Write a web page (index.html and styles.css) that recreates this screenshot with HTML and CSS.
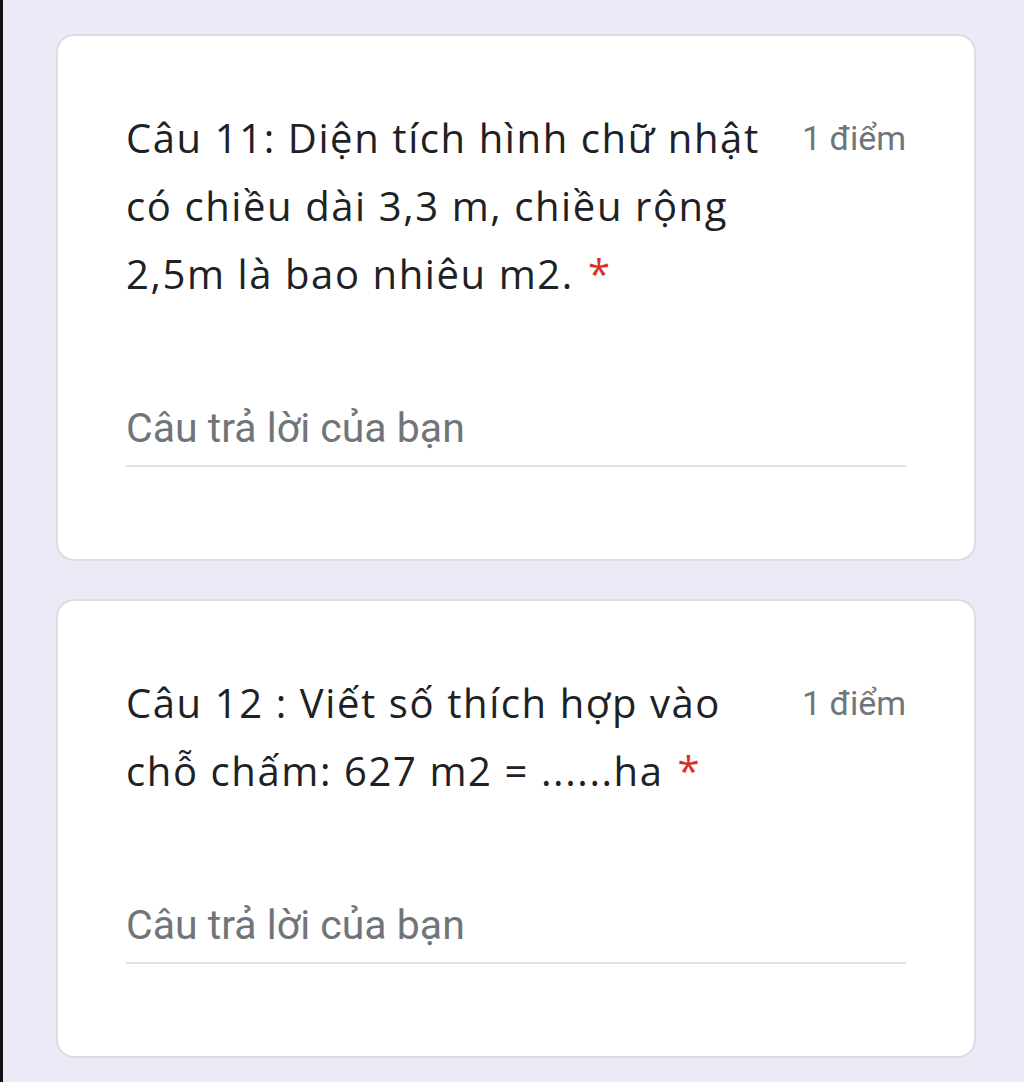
FILE: index.html
```html
<!DOCTYPE html>
<html lang="vi">

<head>
    <meta charset="UTF-8">
    <meta name="viewport" content="width=device-width, initial-scale=1.0">
    <title>Câu hỏi</title>
    <link rel="stylesheet" href="styles.css">
</head>

<body>
    <div class="page">
        <!-- Question 11 -->
        <div class="card">
            <div class="question-row">
                <div class="question">Câu 11: Diện tích hình chữ nhật có chiều dài 3,3 m, chiều rộng 2,5m là bao nhiêu m2.<span class="required">*</span></div>
                <div class="points">1 điểm</div>
            </div>
            <div class="answer">Câu trả lời của bạn</div>
        </div>

        <!-- Question 12 -->
        <div class="card">
            <div class="question-row">
                <div class="question">Câu 12 : Viết số thích hợp vào chỗ chấm: 627 m2 = ......ha<span class="required">*</span></div>
                <div class="points">1 điểm</div>
            </div>
            <div class="answer">Câu trả lời của bạn</div>
        </div>
    </div>
</body>

</html>
```

FILE: styles.css
```css
body {
    margin: 0;
    padding: 0;
    background-color: #ede9f7; /* lavender form background */
    font-family: "Open Sans", sans-serif;
    border-left: 3px solid #111;
    min-height: 1082px;
    box-sizing: border-box;
}

.page {
    display: flex;
    flex-direction: column;
    gap: 38px;
    padding: 34px 48px 0 53px;
}

.card {
    background-color: white;
    border: 2px solid #dcdce2;
    border-radius: 18px;
    padding: 68px 68px 92px 68px;
}

.question-row {
    display: flex;
    justify-content: space-between;
    align-items: flex-start;
    gap: 30px;
}

.question {
    flex: 1;
    font-size: 40px;
    letter-spacing: 1.6px;
    line-height: 68px;
    color: #202124;
    max-width: 650px;
}

.required {
    color: #d93025;
    margin-left: 14px;
}

.points {
    font-family: Roboto, sans-serif;
    font-size: 34px;
    line-height: 68px;
    color: #70757a;
    white-space: nowrap;
}

.answer {
    margin-top: 96px;
    font-family: Roboto, sans-serif;
    font-size: 41px;
    line-height: 48px;
    color: #70757a;
    padding-bottom: 13px;
    border-bottom: 2px solid #e2e2e6;
}
```
